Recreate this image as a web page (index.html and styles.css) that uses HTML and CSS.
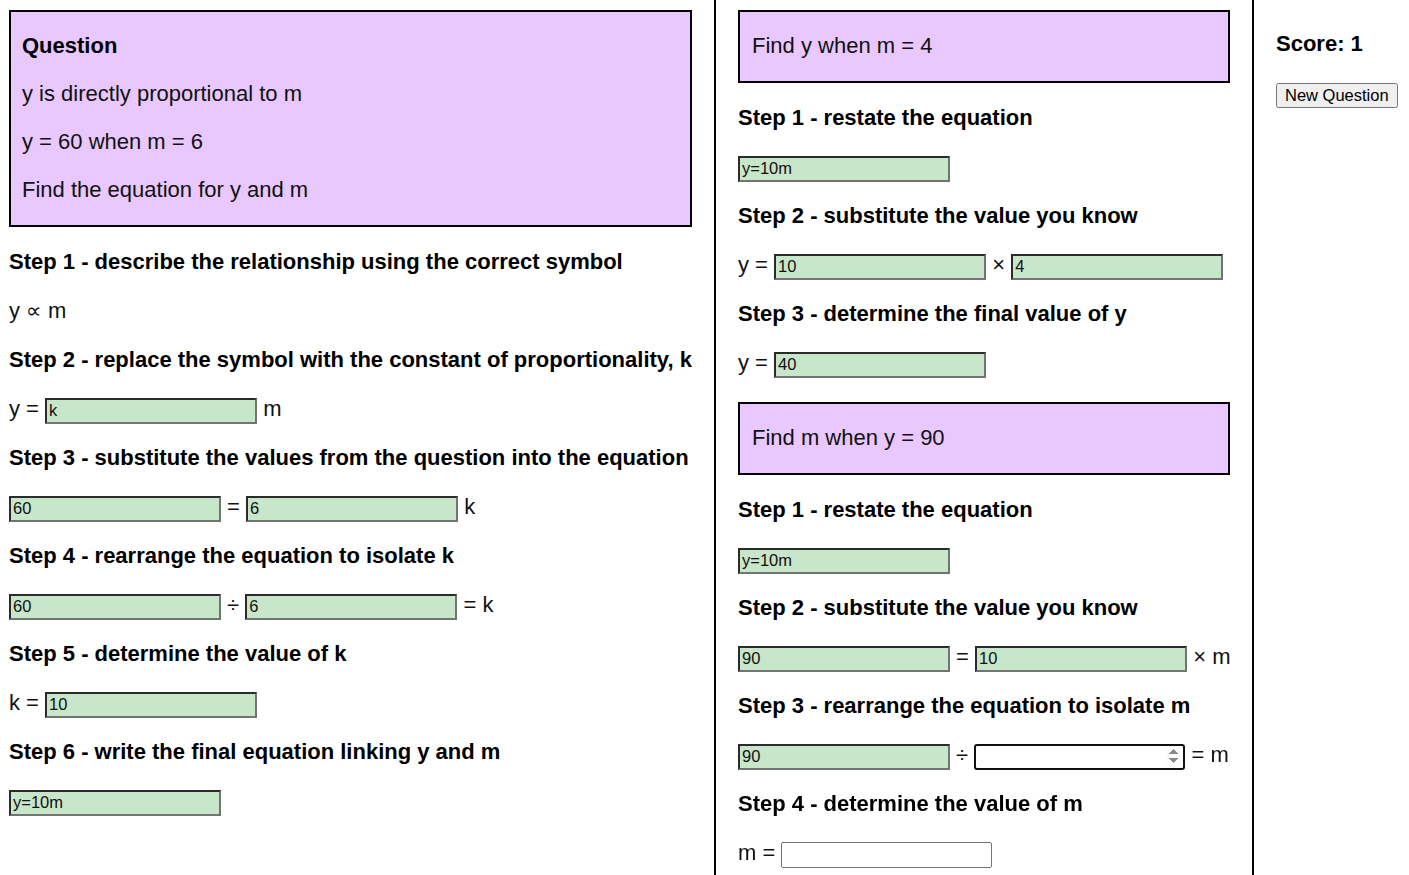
FILE: index.html
```html
<!DOCTYPE html>
<html lang="en">
<head>
<meta charset="utf-8">
<title>Direct proportion</title>
<link rel="stylesheet" href="styles.css">
</head>
<body>
<div class="page">
  <section class="col col-left">
    <div class="box box-left">
      <p class="bold">Question</p>
      <p>y is directly proportional to m</p>
      <p>y = 60 when m = 6</p>
      <p>Find the equation for y and m</p>
    </div>
    <div class="row bold">Step 1 - describe the relationship using the correct symbol</div>
    <div class="row">y ∝ m</div>
    <div class="row bold">Step 2 - replace the symbol with the constant of proportionality, k</div>
    <div class="row">y = <input class="ans" type="text" value="k"> m</div>
    <div class="row bold">Step 3 - substitute the values from the question into the equation</div>
    <div class="row"><input class="ans" type="text" value="60"> = <input class="ans" type="text" value="6"> k</div>
    <div class="row bold">Step 4 - rearrange the equation to isolate k</div>
    <div class="row"><input class="ans" type="text" value="60"> ÷ <input class="ans" type="text" value="6"> = k</div>
    <div class="row bold">Step 5 - determine the value of k</div>
    <div class="row">k = <input class="ans" type="text" value="10"></div>
    <div class="row bold">Step 6 - write the final equation linking y and m</div>
    <div class="row"><input class="ans" type="text" value="y=10m"></div>
  </section>

  <section class="col col-mid">
    <div class="box">
      <p>Find y when m = 4</p>
    </div>
    <div class="row bold">Step 1 - restate the equation</div>
    <div class="row"><input class="ans" type="text" value="y=10m"></div>
    <div class="row bold">Step 2 - substitute the value you know</div>
    <div class="row">y = <input class="ans" type="text" value="10"> × <input class="ans" type="text" value="4"></div>
    <div class="row bold">Step 3 - determine the final value of y</div>
    <div class="row">y = <input class="ans" type="text" value="40"></div>

    <div class="box box-second">
      <p>Find m when y = 90</p>
    </div>
    <div class="row bold">Step 1 - restate the equation</div>
    <div class="row"><input class="ans" type="text" value="y=10m"></div>
    <div class="row bold">Step 2 - substitute the value you know</div>
    <div class="row"><input class="ans" type="text" value="90"> = <input class="ans" type="text" value="10"> × m</div>
    <div class="row bold">Step 3 - rearrange the equation to isolate m</div>
    <div class="row"><input class="ans" type="text" value="90"> ÷ <input class="num" type="number" autofocus> = m</div>
    <div class="row bold">Step 4 - determine the value of m</div>
    <div class="row">m = <input class="plain" type="text"></div>
  </section>

  <aside class="col col-right">
    <p class="score">Score: 1</p>
    <button class="btn" type="button">New Question</button>
  </aside>
</div>
</body>
</html>
```

FILE: styles.css
```css
html, body {
  margin: 0;
  padding: 0;
  background: #fff;
}

body {
  font-family: "Liberation Sans", Arial, "DejaVu Sans", sans-serif;
  font-size: 22px;
  color: #111;
}

.page {
  display: flex;
  align-items: stretch;
  min-height: 875px;
}

.col {
  box-sizing: border-box;
  min-height: 875px;
}

.col-left {
  width: 716px;
  padding: 10px 22px 0 9px;
  border-right: 2px solid #000;
}

.col-mid {
  width: 538px;
  padding: 10px 22px 0 22px;
  border-right: 2px solid #000;
}

.col-right {
  flex: 1;
  padding: 0 0 0 22px;
}

.box {
  background: #e8c8fe;
  border: 2px solid #000;
  padding: 22px 12px 23px 12px;
  margin-bottom: 10px;
}

.box-left {
  padding-left: 11px;
}

.box-second {
  margin-top: 15px;
}

.box p {
  margin: 0;
  line-height: 24px;
}

.box p + p {
  margin-top: 24px;
}

.bold {
  font-weight: bold;
  color: #000;
}

.row {
  height: 49px;
  line-height: 49px;
  white-space: nowrap;
}

.ans {
  box-sizing: border-box;
  width: 212px;
  height: 26px;
  margin: 0;
  padding: 1px 2px;
  font-family: "Liberation Sans", Arial, sans-serif;
  font-size: 16.5px;
  color: #111;
  background: #c8e6c9;
  border: 2px solid;
  border-color: #2b2b2b #737373 #737373 #2b2b2b;
  border-radius: 0;
  vertical-align: baseline;
}

.num,
.plain {
  box-sizing: border-box;
  width: 211px;
  height: 26px;
  margin: 0;
  font-family: "Liberation Sans", Arial, sans-serif;
  font-size: 16.5px;
  vertical-align: baseline;
}

.num {
  border: 2px solid #101010;
  border-radius: 3px;
  background: #fff;
  padding: 1px 2px;
}

.num:focus {
  outline: none;
}

.score {
  margin: 32px 0 0 0;
  line-height: 24px;
  font-weight: bold;
  color: #000;
}

.btn {
  margin-top: 27px;
  font-family: "Liberation Sans", Arial, sans-serif;
  font-size: 16.5px;
  padding: 1px 7px;
}
```
